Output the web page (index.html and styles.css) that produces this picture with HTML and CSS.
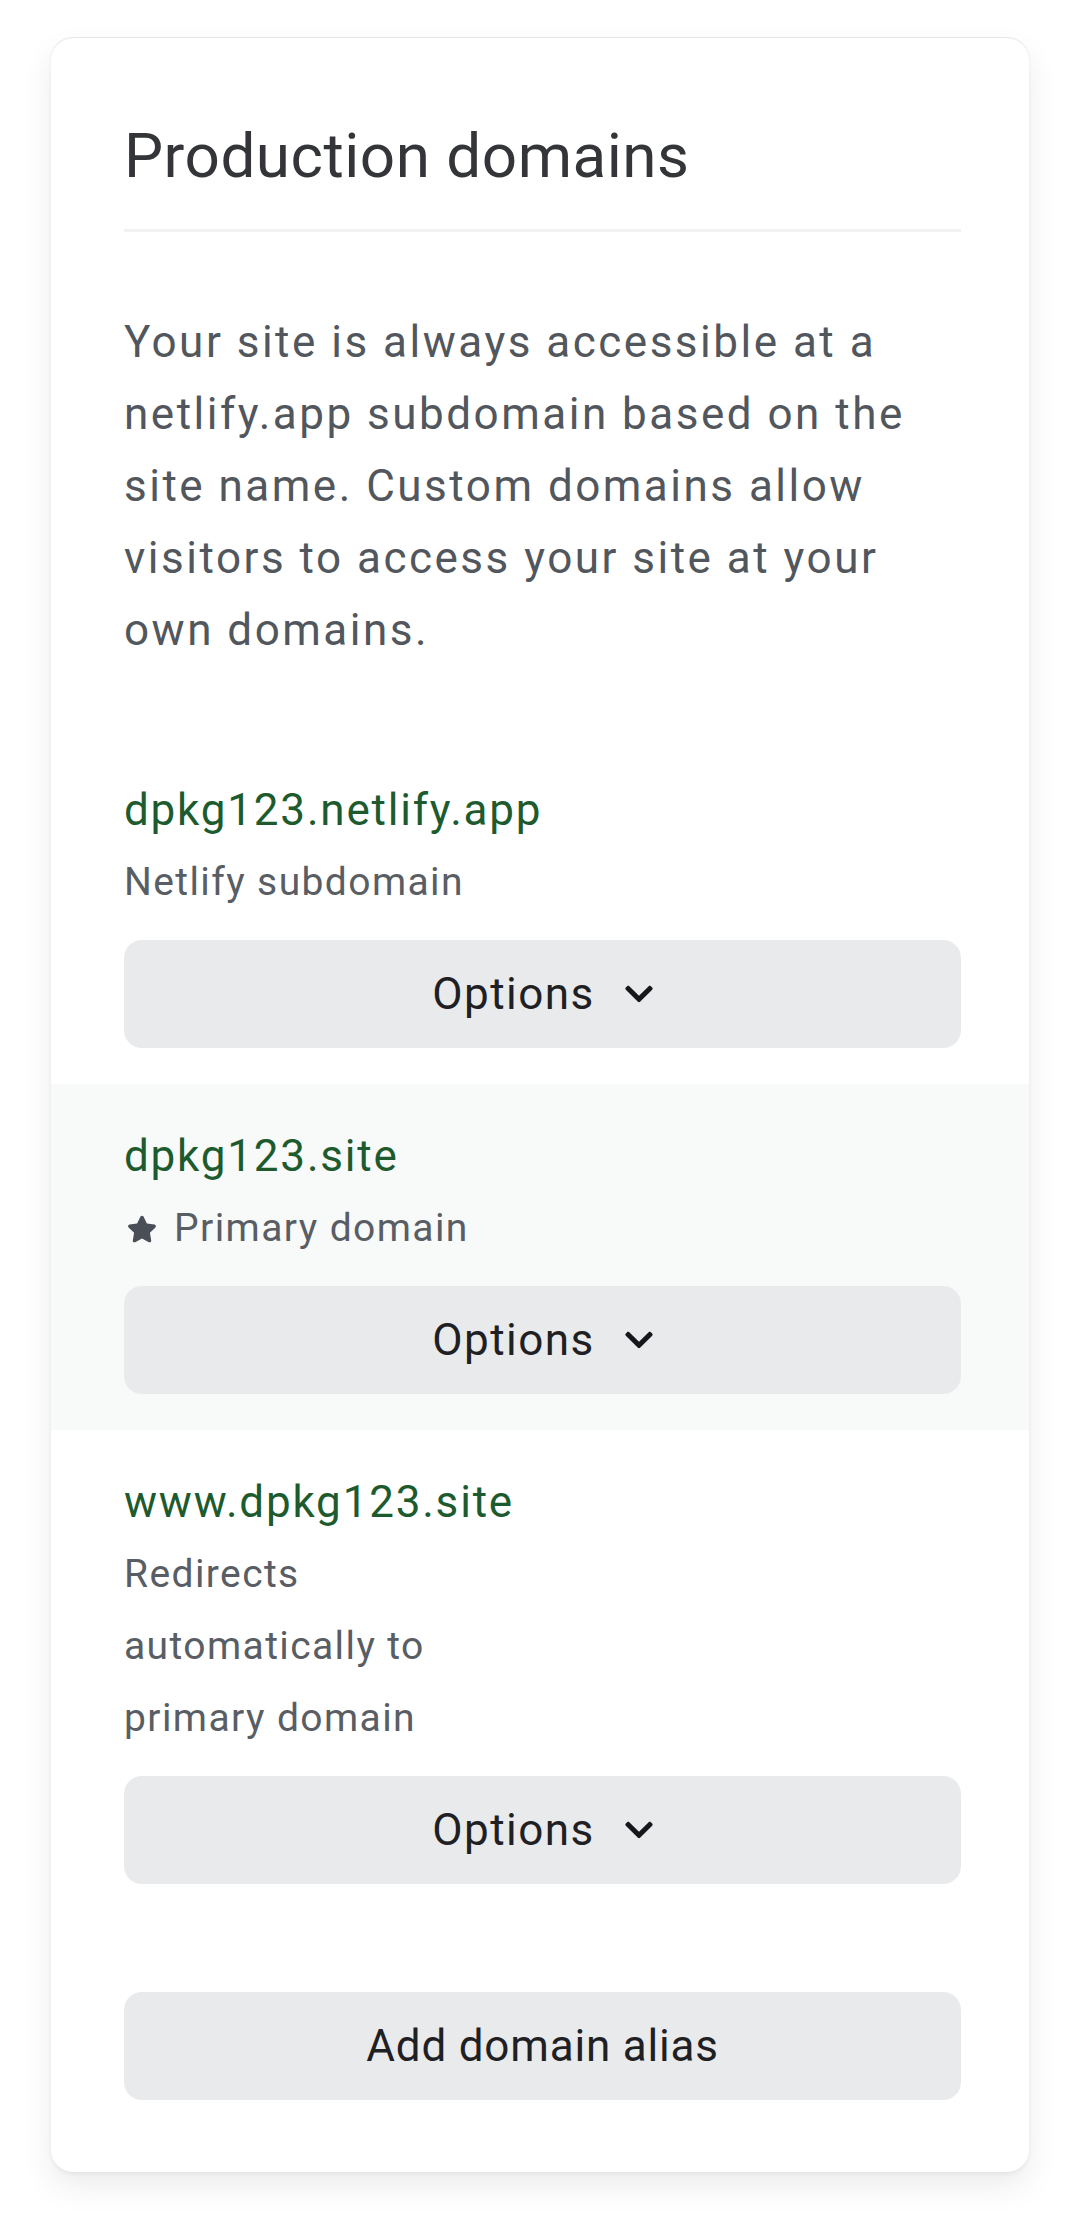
FILE: index.html
```html
<!DOCTYPE html>
<html>
<head>
    <title>Production domains</title>
    <link rel="stylesheet" href="styles.css">
</head>
<body>
    <div class="domains-card">
        <div class="card-header">
            <h2>Production domains</h2>
        </div>

        <p class="intro">Your site is always accessible at a netlify.app subdomain based on the site name. Custom domains allow visitors to access your site at your own domains.</p>

        <div class="domain-list">
            <div class="domain-item">
                <div class="domain-name">dpkg123.netlify.app</div>
                <div class="domain-note">Netlify subdomain</div>
                <button class="options-btn">Options
                    <svg class="chevron" viewBox="0 120 448 272"><path d="M207.029 381.476L12.686 187.132c-9.373-9.373-9.373-24.569 0-33.941l22.667-22.667c9.357-9.357 24.522-9.375 33.901-.04L224 284.505l154.745-154.021c9.379-9.335 24.544-9.317 33.901.04l22.667 22.667c9.373 9.373 9.373 24.569 0 33.941L240.971 381.476c-9.373 9.372-24.569 9.372-33.942 0z"/></svg>
                </button>
            </div>

            <div class="domain-item primary">
                <div class="domain-name">dpkg123.site</div>
                <div class="domain-note">
                    <svg class="star" viewBox="0 0 576 512"><path d="M259.3 17.8L194 150.2 47.9 171.5c-26.2 3.8-36.7 36.1-17.7 54.6l105.7 103-25 145.5c-4.5 26.3 23.2 46 46.4 33.7L288 439.6l130.7 68.7c23.2 12.2 50.9-7.4 46.4-33.7l-25-145.5 105.7-103c19-18.5 8.5-50.8-17.700-54.6L382 150.2 316.7 17.8c-11.7-23.6-45.6-23.9-57.4 0z"/></svg>
                    Primary domain
                </div>
                <button class="options-btn">Options
                    <svg class="chevron" viewBox="0 120 448 272"><path d="M207.029 381.476L12.686 187.132c-9.373-9.373-9.373-24.569 0-33.941l22.667-22.667c9.357-9.357 24.522-9.375 33.901-.04L224 284.505l154.745-154.021c9.379-9.335 24.544-9.317 33.901.04l22.667 22.667c9.373 9.373 9.373 24.569 0 33.941L240.971 381.476c-9.373 9.372-24.569 9.372-33.942 0z"/></svg>
                </button>
            </div>

            <div class="domain-item">
                <div class="domain-name">www.dpkg123.site</div>
                <div class="domain-note">Redirects automatically to primary domain</div>
                <button class="options-btn">Options
                    <svg class="chevron" viewBox="0 120 448 272"><path d="M207.029 381.476L12.686 187.132c-9.373-9.373-9.373-24.569 0-33.941l22.667-22.667c9.357-9.357 24.522-9.375 33.901-.04L224 284.505l154.745-154.021c9.379-9.335 24.544-9.317 33.901.04l22.667 22.667c9.373 9.373 9.373 24.569 0 33.941L240.971 381.476c-9.373 9.372-24.569 9.372-33.942 0z"/></svg>
                </button>
            </div>
        </div>

        <div class="card-footer">
            <button class="alias-btn">Add domain alias</button>
        </div>
    </div>
</body>
</html>
```

FILE: styles.css
```css
body {
    font-family: Roboto, "Liberation Sans", sans-serif;
    margin: 0;
    padding: 38px 51px 40px;
    background-color: #ffffff;
}

.domains-card {
    background: white;
    border-radius: 22px;
    box-shadow: 0 -1px 0 #e6e6e6, 0 2px 4px rgba(0,0,0,0.06), 0 14px 32px rgba(0,0,0,0.08);
    padding-bottom: 72px;
}

.card-header {
    margin: 0 68px 0 73px;
    padding-top: 82px;
    padding-bottom: 37px;
    border-bottom: 3px solid #f2f2f3;
}

h2 {
    margin: 0;
    font-size: 62px;
    line-height: 72px;
    font-weight: 400;
    color: #333538;
    letter-spacing: 0.5px;
}

.intro {
    margin: 74px 68px 72px 73px;
    font-size: 44px;
    line-height: 72px;
    color: #52565d;
    letter-spacing: 2.5px;
}

.domain-item {
    padding: 36px 68px 36px 73px;
}

.domain-item.primary {
    background: #f8f9f9;
}

.domain-name {
    font-size: 44px;
    line-height: 72px;
    color: #1d5b2e;
    letter-spacing: 1.8px;
}

.domain-note {
    max-width: 420px;
    font-size: 39px;
    line-height: 72px;
    color: #595d64;
    letter-spacing: 1.4px;
}

.star {
    width: 30px;
    height: 28px;
    fill: #4a4f57;
    margin-left: 3px;
    margin-right: 6px;
    vertical-align: -2px;
}

.options-btn,
.alias-btn {
    display: flex;
    align-items: center;
    justify-content: center;
    width: 100%;
    height: 108px;
    margin-top: 22px;
    border: none;
    border-radius: 18px;
    background: #e9eaec;
    font-family: Roboto, "Liberation Sans", sans-serif;
    font-size: 44px;
    color: #1f2023;
    letter-spacing: 1.5px;
}

.chevron {
    width: 28px;
    height: 18px;
    margin-left: 30px;
    fill: #16171a;
}

.card-footer {
    margin: 72px 68px 0 73px;
}

.alias-btn {
    margin-top: 0;
    letter-spacing: 0.8px;
}
```
